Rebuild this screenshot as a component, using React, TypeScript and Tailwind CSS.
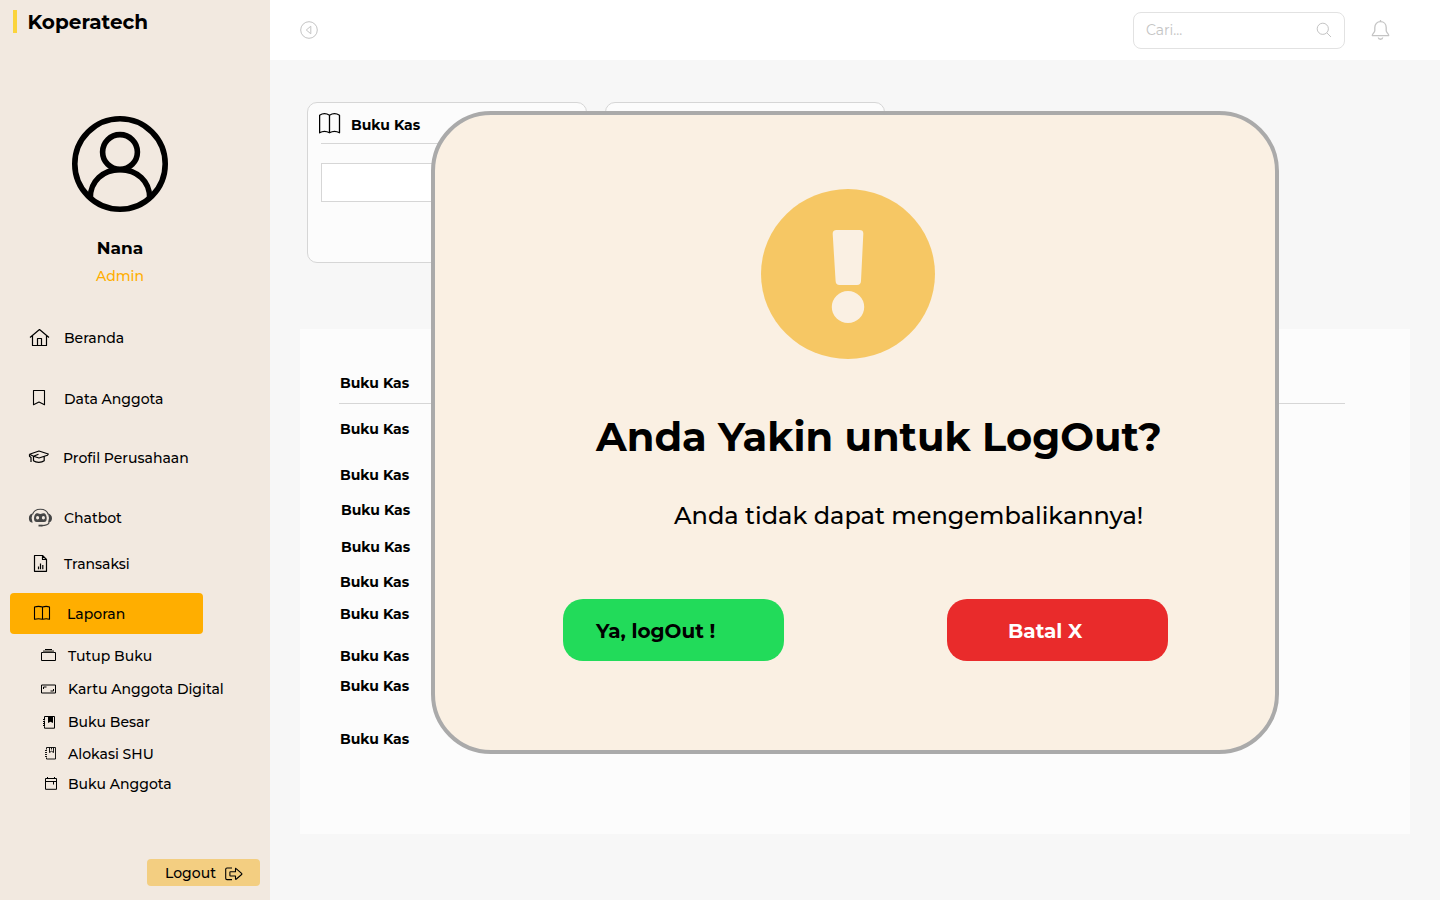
import React from "react";

type IconProps = { children: React.ReactNode; className?: string; box?: string };

function Icon({ children, className = "", box = "0 0 24 24" }: IconProps) {
  return (
    <svg viewBox={box} fill="none" stroke="currentColor" strokeWidth={1} strokeLinejoin="round" className={className}>
      {children}
    </svg>
  );
}

const menu = [
  {
    label: "Beranda",
    row: "h-[60px]",
    text: "ml-[13px]",
    icon: (
      <Icon box="0 0 22 20" className="ml-[29px] h-5 w-[22px]">
        <path d="M1 9.500L10.500 1.500L20 9.500M3.500 7.700V17.500H17.500V7.700M8.500 17.300V10.500H12.500V17.300" strokeWidth={1.2} />
      </Icon>
    ),
  },
  {
    label: "Data Anggota",
    row: "h-[62px]",
    text: "ml-[18px]",
    icon: (
      <Icon box="0 0 14 18" className="-mt-[2px] ml-8 h-[18px] w-3.5">
        <path d="M1.500 1.500H12.500V15.800L7 13L1.500 15.800Z" strokeWidth={1.1} />
      </Icon>
    ),
  },
  {
    label: "Profil Perusahaan",
    row: "h-[56px]",
    text: "ml-[13px]",
    icon: (
      <Icon box="0 0 22 16" className="-mt-[2px] ml-[28px] h-4 w-[22px]">
        <path
          d="M1.500 5.300L11 2L20.300 5L19.500 6.200L11 9L5.500 7.200L10.500 5.200M5.500 7.200V11.800C8 13.800 13.500 13.800 16.200 11.800V7.300M1.500 5.300V7.200L3 8.500V13M1.500 5.300L5.500 7.200"
          strokeWidth={1.2}
        />
      </Icon>
    ),
  },
  {
    label: "Chatbot",
    row: "h-[64px]",
    text: "ml-[12px]",
    icon: (
      <Icon box="0 0 24 20" className="ml-7 h-5 w-6 text-[#454545]">
        <path d="M4.500 6.500C6.500 -.6 18.300 -.6 20.300 6.500M21.300 14.500C20.500 16.700 17.500 17.600 13.500 17.600" strokeWidth={1.1} />
        <path d="M10.500 17.600H14.500" strokeWidth={1.8} />
        <path
          d="M4.600 5.500L3.600 10L4.600 14.700C2 14.700 .9 12.800 .9 10.300C.9 7.800 2 6 4.600 5.500ZM20 5.500L21 10L20 14.700C22.500 14.700 24 12.800 24 10.300C24 7.800 22.500 6 20 5.500Z"
          fill="currentColor"
          stroke="none"
        />
        <path
          fillRule="evenodd"
          d="M8.500 5.200C10 5 10.500 5.900 12.400 5.900C14.200 5.900 14.700 5 16.300 5.200C18 5.700 18.700 8 18.700 10.500C18.700 13 17.800 14 16 14H8.800C7 14 6 13 6 10.500C6 8 6.800 5.700 8.500 5.200ZM9.600 8C8.600 8 8.100 8.800 8.100 9.700C8.100 10.600 8.600 11.400 9.600 11.400C10.600 11.400 11.100 10.600 11.100 9.700C11.100 8.800 10.600 8 9.600 8ZM15.400 8C14.400 8 13.900 8.800 13.900 9.700C13.900 10.600 14.400 11.400 15.400 11.400C16.400 11.400 16.900 10.600 16.900 9.700C16.900 8.800 16.400 8 15.400 8Z"
          fill="currentColor"
          stroke="none"
        />
      </Icon>
    ),
  },
  {
    label: "Transaksi",
    row: "h-7",
    text: "ml-[16px]",
    icon: (
      <Icon box="0 0 15 18" className="-mt-[2px] ml-[33px] h-[18px] w-[15px]">
        <path
          d="M1.500 1.500H9.500L13.500 5.500V17.300H1.500ZM9.500 1.500V5.500H13.500M5.500 12.500V15.300M7.500 9.500V15.300M9.800 11V15.300"
          strokeWidth={1.2}
        />
      </Icon>
    ),
  },
];

const submenu = [
  {
    label: "Tutup Buku",
    row: "h-8",
    pad: "pl-10",
    icon: (
      <Icon box="0 0 16 14" className="-mt-[2px] mr-3 h-3.5 w-4">
        <path d="M1.500 4.500H15.500V12.500H1.500ZM5 1.500H12" />
        <path d="M3 3.300H14" stroke="#6c6861" strokeWidth={2} />
      </Icon>
    ),
  },
  {
    label: "Kartu Anggota Digital",
    row: "h-[34px]",
    pad: "pl-10",
    icon: (
      <Icon box="0 0 16 10" className="-mt-px mr-3 h-2.5 w-4">
        <path d="M1.500 1H15.500V9H1.500ZM3.500 5V3H6.500M13.500 5V7H10.500" />
      </Icon>
    ),
  },
  {
    label: "Buku Besar",
    row: "h-8",
    pad: "pl-[42px]",
    icon: (
      <Icon box="0 0 14 14" className="mr-3 h-3.5 w-3.5">
        <path d="M2.500 4V1.500H12.500V13.200H2.500V11.200M2.500 5.500V10M1 4.500H3M1 6.500H3M1 8.500H3M1 10.500H3" />
        <path d="M6 1.300H11V8L8.500 6.700L6 8Z" fill="currentColor" stroke="none" />
      </Icon>
    ),
  },
  {
    label: "Alokasi SHU",
    row: "h-8",
    pad: "pl-11",
    icon: (
      <Icon box="0 0 13 14" className="-mt-[2px] mr-[11px] h-3.5 w-[13px]">
        <path
          d="M2.500 3.500V1.500H11.500V13H2.500V11.500M1 4.500H3M1 6.500H3M1 8.500H3M1 10.500H3M5.500 1.500V6.500L7.500 5.200L9.500 6.500V1.500M7.500 1.500V3.500"
          strokeWidth={0.9}
        />
      </Icon>
    ),
  },
  {
    label: "Buku Anggota",
    row: "h-7",
    pad: "pl-11",
    icon: (
      <Icon box="0 0 14 14" className="-mt-[2px] mr-[10px] h-3.5 w-3.5">
        <path d="M1.500 2.500H12.500V13.300H1.500ZM1.500 5.500H12.500M9.500 5.500V8.500M3.500 1V3M10.500 1V3" />
      </Icon>
    ),
  },
];

const ledger = [
  "h-[46px]",
  "h-[46px]",
  "h-[46px]",
  "h-[24px] pl-px",
  "h-[50px] pl-px",
  "h-[20px]",
  "h-[44px]",
  "h-[40px]",
  "h-[20px]",
  "h-[86px]",
];

function Sidebar() {
  return (
    <aside className="flex h-[900px] w-[270px] shrink-0 flex-col bg-[#f2e9e0] text-sm font-medium">
      <div className="flex h-11 items-center pl-[13px]">
        <span className="-mt-px h-[23px] w-1 bg-[#fbd43c]" />
        <span className="ml-[10.5px] text-xl font-bold">Koperatech</span>
      </div>
      <div className="mt-[72px] flex w-60 flex-col items-center">
        <svg viewBox="0 0 96 96" fill="none" stroke="#000" strokeWidth={5.6} className="h-24 w-24">
          <circle cx="48" cy="48" r="45.2" />
          <circle cx="48" cy="36" r="17.4" />
          <path d="M18.300 82C18.300 65 31 53.800 48 53.800S77.700 65 77.700 82" />
        </svg>
        <span className="mt-6 h-6 text-[17px] leading-6 font-bold">Nana</span>
        <span className="mt-[6px] h-5 leading-5 text-[#ffae00]">Admin</span>
      </div>
      <nav className="mt-[22px] flex flex-col">
        {menu.map((m) => (
          <a key={m.label} className={"flex items-center " + m.row}>
            {m.icon}
            <span className={m.text}>{m.label}</span>
          </a>
        ))}
        <a className="mt-[15px] ml-[10px] flex h-[41px] w-[193px] items-center rounded bg-[#ffae00]">
          <Icon box="0 0 18 16" className="-mt-[2px] ml-[23px] h-4 w-[18px]">
            <path
              d="M1.500 2C4 1.200 7 1.200 9.500 2C12 1.200 14.500 1.200 16.500 2V14.300C14.500 13.600 12 13.600 9.500 14.300C7 13.600 4 13.600 1.500 14.300ZM9.500 2V14.300"
              strokeWidth={1.1}
            />
          </Icon>
          <span className="mt-px ml-4">Laporan</span>
        </a>
        <div className="mt-[6px] flex flex-col">
          {submenu.map((m) => (
            <a key={m.label} className={"flex items-center " + m.row + " " + m.pad}>
              {m.icon}
              <span>{m.label}</span>
            </a>
          ))}
        </div>
      </nav>
      <button className="mt-auto mr-[10px] mb-[14px] flex h-[27px] w-[113px] items-center self-end rounded bg-[#f3ce81] pl-[18px]">
        <span className="mt-px">Logout</span>
        <Icon box="0 0 18 14" className="mt-[2px] ml-[9px] h-3.5 w-[18px]">
          <path
            d="M7 1H2Q.7 1 .7 2.300V11.300Q.7 12.600 2 12.600H7M5.500 4.700H10.500V2Q10.500 .9 11.400 1.800L16.600 6.400Q17.200 7 16.600 7.500L11.400 12Q10.500 12.800 10.500 11.700V9H5.500Q4.900 9 4.900 8.400V5.300Q4.900 4.700 5.500 4.700Z"
            strokeWidth={1.1}
          />
        </Icon>
      </button>
    </aside>
  );
}

function TopBar() {
  return (
    <header className="flex h-[60px] items-center bg-white pl-[30px] text-[#c4c4c4]">
      <Icon box="0 0 18 18" className="h-[18px] w-[18px]">
        <circle cx="9" cy="9" r="8.3" />
        <path d="M10.800 5.200V12.800L6.300 9Z" />
      </Icon>
      <div className="ml-auto flex h-[37px] w-[212px] items-center rounded-lg border border-[#e2e2e2] pr-3 pl-3">
        <span className="text-sm">Cari...</span>
        <Icon box="0 0 16 16" className="ml-auto h-4 w-4">
          <circle cx="6.8" cy="6.8" r="5.6" />
          <path d="M10.800 10.800L15 15" />
        </Icon>
      </div>
      <Icon box="0 0 20 22" className="mr-[50px] ml-[25px] h-[22px] w-5">
        <path
          d="M10.500 1V2.700M10.500 2.700C7 2.700 4.800 5.300 4.800 8.500V11.500C4.800 13.800 2.300 14.500 2.300 16.600H18.700C18.700 14.500 16.200 13.800 16.200 11.500V8.500C16.200 5.300 14 2.700 10.500 2.700ZM8.300 18.500C8.500 20.800 12.500 20.800 12.700 18.500"
          strokeWidth={1.3}
        />
      </Icon>
    </header>
  );
}

function ConfirmDialog() {
  return (
    <div
      role="dialog"
      className="absolute top-[111px] left-[431px] flex h-[643px] w-[848px] flex-col rounded-[60px] border-4 border-[#aaaaaa] bg-[#faf0e3]"
    >
      <svg viewBox="0 0 174 170" className="mt-[74px] ml-[326px] h-[170px] w-[174px] shrink-0">
        <ellipse cx="87" cy="85" rx="87" ry="85" fill="#f6c764" />
        <path
          d="M75.500 41H98.500Q102.600 41 102.300 45L100 92Q99.800 96 96 96H78.500Q74.800 96 74.600 92L71.700 45Q71.500 41 75.500 41Z"
          fill="#faf0e3"
        />
        <ellipse cx="87" cy="118" rx="16.2" ry="16" fill="#faf0e3" />
      </svg>
      <h1 className="mt-[48px] ml-[161px] h-[60px] text-[40px] leading-[60px] font-bold whitespace-nowrap">
        Anda Yakin untuk LogOut?
      </h1>
      <p className="mt-[29px] ml-[239px] h-10 text-2xl leading-10 font-medium whitespace-nowrap">
        Anda tidak dapat mengembalikannya!
      </p>
      <div className="mt-[63px] flex text-xl font-bold">
        <button className="ml-32 h-[62px] w-[221px] rounded-[20px] bg-[#22db5a] pt-px pl-[33px] text-left">
          Ya, logOut !
        </button>
        <button className="ml-[163px] h-[62px] w-[221px] rounded-[20px] bg-[#e92b2b] pt-px pl-[61px] text-left text-white">
          Batal X
        </button>
      </div>
    </div>
  );
}

export default function App() {
  return (
    <div className="relative flex h-[900px] w-[1440px] overflow-hidden bg-[#f7f7f7] font-['Montserrat','Inter',sans-serif] text-black">
      <Sidebar />
      <main className="flex flex-1 flex-col">
        <TopBar />
        <div className="mt-[42px] ml-[37px] flex gap-[18px]">
          <section className="h-[161px] w-[280px] rounded-[10px] border border-[#d6d6d6] bg-[#fcfcfc] px-[13px]">
            <div className="-ml-[2px] flex h-10 items-center">
              <Icon box="0 0 22 21" className="mt-px h-[21px] w-[22px]">
                <path
                  d="M.6 2.200C3.500 .4 7.500 .4 10.500 2.200C13.500 .4 17.500 .4 20.500 2.200V19.800C17.500 18 13.500 18 10.500 19.800C7.500 18 3.500 18 .6 19.800ZM10.500 2.200V19.800"
                  strokeWidth={1.3}
                />
              </Icon>
              <span className="mt-1 ml-[10px] text-sm font-bold">Buku Kas</span>
            </div>
            <div className="h-px bg-[#d6d6d6]" />
            <div className="mt-[19px] h-[39px] border border-[#d6d6d6] bg-white" />
          </section>
          <section className="h-[161px] w-[280px] rounded-[10px] border border-[#d6d6d6] bg-[#fcfcfc]" />
        </div>
        <section className="mt-[66px] ml-[30px] h-[505px] w-[1110px] bg-[#fcfcfc] pt-[31px] pl-[39px] text-sm font-bold">
          {ledger.map((row, i) => (
            <React.Fragment key={i}>
              <div className={"ml-px flex items-center " + row}>Buku Kas</div>
              {i === 0 && <div className="-mt-[3px] mb-[2px] h-px w-[1006px] bg-[#d6d6d6]" />}
            </React.Fragment>
          ))}
        </section>
      </main>
      <ConfirmDialog />
    </div>
  );
}
